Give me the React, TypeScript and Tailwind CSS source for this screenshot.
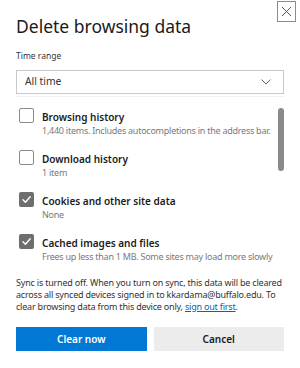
import React from "react";

type Item = { title: string; sub: string; checked: boolean };

const items: Item[] = [
  { title: "Browsing history", sub: "1,440 items. Includes autocompletions in the address bar.", checked: false },
  { title: "Download history", sub: "1 item", checked: false },
  { title: "Cookies and other site data", sub: "None", checked: true },
  { title: "Cached images and files", sub: "Frees up less than 1 MB. Some sites may load more slowly", checked: true },
];

function Checkbox({ checked }: { checked: boolean }) {
  if (checked) {
    return (
      <div className="w-[15px] h-[15px] rounded-[2px] bg-[#6e6e6e] flex items-center justify-center shrink-0">
        <svg width="11" height="11" viewBox="0 0 11 11" fill="none">
          <path d="M2 5.8 L4.4 8.2 L9.2 2.8" stroke="#fff" strokeWidth="1.4" strokeLinecap="round" strokeLinejoin="round" />
        </svg>
      </div>
    );
  }
  return <div className="w-[15px] h-[15px] rounded-[2px] border border-[#8a8a8a] bg-white shrink-0" />;
}

export default function App() {
  return (
    <div
      className="relative w-[300px] h-[368px] bg-white text-[#1b1b1b] px-4 overflow-hidden"
      style={{ fontFamily: '"Noto Sans", "Open Sans", sans-serif' }}
    >
      <button className="absolute top-[1px] right-[4px] w-[19px] h-[21px] border border-[#8c8c8c] flex items-center justify-center">
        <svg width="11" height="11" viewBox="0 0 11 11" fill="none">
          <path d="M1 1 L10 10 M10 1 L1 10" stroke="#555" strokeWidth="1" />
        </svg>
      </button>

      <h1 className="pt-[14px] text-[17.5px] leading-[24px] font-normal">Delete browsing data</h1>

      <div className="mt-[12px] text-[8.5px] leading-[12px] text-[#333]">Time range</div>

      <div className="mt-[8px] h-[24px] border border-[#c8c8c8] flex items-center justify-between pl-[8px] pr-[12px]">
        <span className="text-[10.3px] text-[#333]">All time</span>
        <svg width="10" height="6" viewBox="0 0 10 6" fill="none">
          <path d="M0.5 0.5 L5 5 L9.5 0.5" stroke="#666" strokeWidth="1" />
        </svg>
      </div>

      <div className="mt-[2px] border-t border-[#f2f2f2] relative">
        <div className="absolute right-0 top-[11px] w-[6px] h-[63px] rounded-full bg-[#8a8a8a]" />
        <div className="pt-[11px] pl-[3px] flex flex-col gap-[13px]">
          {items.map((it) => (
            <div key={it.title} className="flex gap-[8px] h-[29px]">
              <Checkbox checked={it.checked} />
              <div className="flex flex-col pt-[1px]">
                <span className="text-[10px] leading-[16px] font-semibold text-[#1b1b1b]">{it.title}</span>
                <span className="text-[9px] leading-[12px] tracking-[-0.25px] text-[#7a7a7a] whitespace-nowrap">{it.sub}</span>
              </div>
            </div>
          ))}
        </div>
      </div>

      <p className="mt-[14px] text-[9px] leading-[12px] tracking-[-0.2px] text-[#333] whitespace-nowrap">
        Sync is turned off. When you turn on sync, this data will be cleared
        <br />
        across all synced devices signed in to kkardama@buffalo.edu. To
        <br />
        clear browsing data from this device only,{" "}
        <a className="text-[#0067b8] underline">sign out first</a>.
      </p>

      <div className="mt-[14px] flex gap-[7px]">
        <button className="flex-1 h-[24px] bg-[#0078d4] text-white text-[10px] font-semibold">Clear now</button>
        <button className="flex-1 h-[24px] bg-[#ececec] text-[#1b1b1b] text-[10px] font-semibold">Cancel</button>
      </div>
    </div>
  );
}
